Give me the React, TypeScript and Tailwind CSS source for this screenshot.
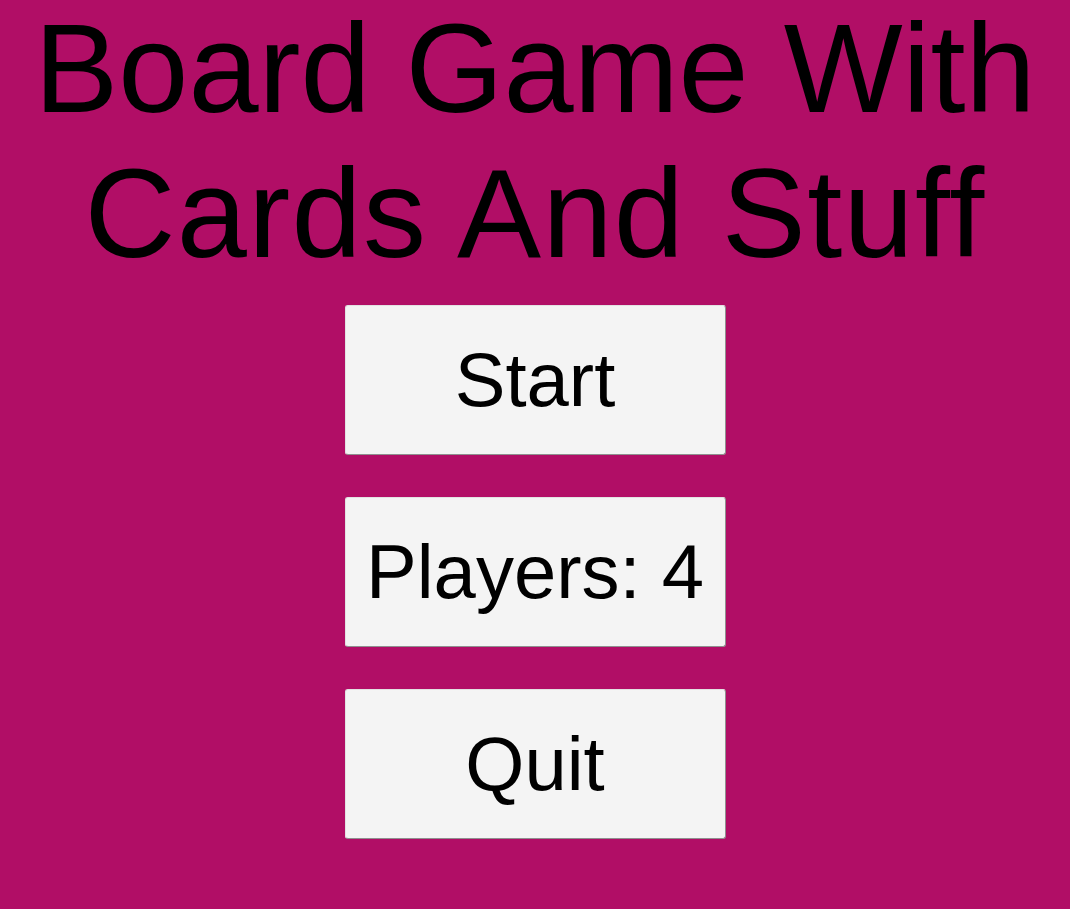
import React from 'react';

const buttons = ['Start', 'Players: 4', 'Quit'];

export default function App() {
  return (
    <div className="w-[1070px] h-[909px] bg-[#b10e66] overflow-hidden font-['Liberation_Sans',Arial,sans-serif] text-black">
      <h1 className="text-center text-[126px] font-normal whitespace-nowrap">
        <span className="block leading-[138px]">Board Game With</span>
        <span className="block leading-[152px] tracking-[1.4px]">Cards And Stuff</span>
      </h1>
      <div className="mt-[15px] flex flex-col items-center gap-[42px]">
        {buttons.map((label) => (
          <button
            key={label}
            className="w-[381px] h-[150px] bg-[#f4f4f4] rounded-[3px] border border-[#e2e2e2] border-b-[#8f8f8f] border-r-[#8f8f8f] text-[76px] leading-none flex items-center justify-center"
          >
            {label}
          </button>
        ))}
      </div>
    </div>
  );
}
